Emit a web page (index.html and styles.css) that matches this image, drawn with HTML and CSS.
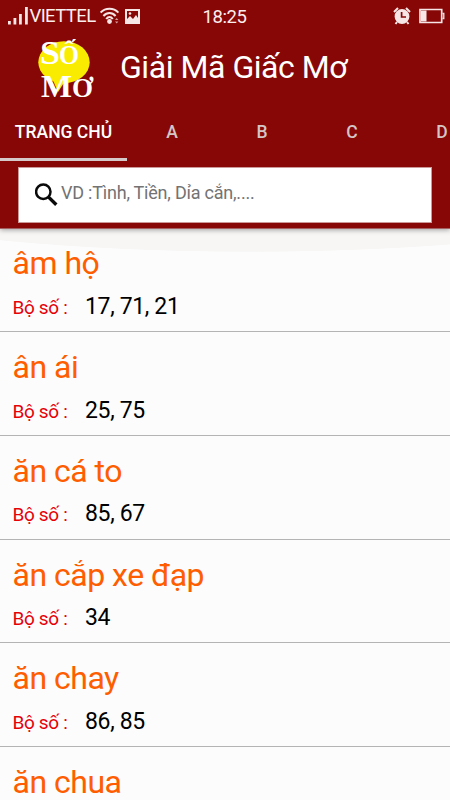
FILE: index.html
```
<!DOCTYPE html>
<html lang="vi">
<head>
  <meta charset="UTF-8">
  <meta name="viewport" content="width=device-width, initial-scale=1.0">
  <title>Giải Mã Giấc Mơ</title>
  <link rel="stylesheet" href="styles.css">
</head>
<body>
  <div class="app">
    <header class="header">
      <div class="status-bar">
        <svg class="signal" width="20" height="18" viewBox="0 0 20 18" fill="#f6e6e6">
          <rect x="0" y="14" width="2.800" height="3.500"/>
          <rect x="5.500" y="11" width="2.800" height="6.500"/>
          <rect x="11" y="7" width="2.800" height="10.500"/>
          <rect x="17" y="0" width="2.800" height="17.500"/>
        </svg>
        <span class="carrier">VIETTEL</span>
        <svg class="wifi" width="20" height="18" viewBox="0 0 20 18" fill="none" stroke="#f6e6e6" stroke-width="2">
          <path d="M.6 5.600C5.500 .6 13.500 .6 18.400 5.600"/>
          <path d="M3.400 9C7 5 12 5 15.600 9"/>
          <path d="M6.200 12C8.200 9.300 10.800 9.300 12.800 12"/>
          <circle cx="9.500" cy="14.500" r="2.400" fill="#f6e6e6" stroke="none"/>
          <path d="M15 13l1.700-2 1.700 2zM15 14.500l1.700 2 1.700-2z" fill="#d79c9c" stroke="none"/>
        </svg>
        <svg class="photo" width="15" height="15" viewBox="0 0 15 15">
          <path d="M0 0h15v15H0zM2 2v8l3-3 3 3 3-4 2 3V2z" fill="#f6e6e6" fill-rule="evenodd"/>
          <circle cx="5" cy="4.500" r="1.300" fill="#f6e6e6"/>
        </svg>
        <span class="clock">18:25</span>
        <svg class="alarm" width="18" height="18" viewBox="0 0 18 18">
          <circle cx="9" cy="9.500" r="7.400" fill="#f6e6e6"/>
          <path d="M1 5l4-4M17 5l-4-4M4 15l-1.500 2M14 15l1.500 2" stroke="#f6e6e6" stroke-width="2" fill="none"/>
          <path d="M8.600 5v5h4.400" stroke="#870606" stroke-width="1.700" fill="none"/>
        </svg>
        <svg class="battery" width="26" height="16" viewBox="0 0 26 16">
          <path d="M1 1.500h21.700v13H1z" fill="none" stroke="#f6e6e6" stroke-width="1.700"/>
          <rect x="2" y="2.500" width="5.500" height="11" fill="#f6e6e6"/>
          <path d="M23.500 5.500h1.300v5h-1.300" fill="none" stroke="#f6e6e6" stroke-width="1.300"/>
        </svg>
      </div>

      <div class="toolbar">
        <svg class="logo" width="60" height="68" viewBox="0 0 60 68">
          <ellipse cx="29" cy="28.200" rx="25.700" ry="21" fill="#f9ec00"/>
          <path d="M17 44h15l-9 14z" fill="#f9ec00"/>
          <g class="logo-text">
            <text x="5" y="29.500" font-size="34" textLength="20" lengthAdjust="spacingAndGlyphs">S</text>
            <text x="24" y="29.500" font-size="27" textLength="20" lengthAdjust="spacingAndGlyphs">Ố</text>
            <text x="6" y="63" font-size="32" textLength="31" lengthAdjust="spacingAndGlyphs">M</text>
            <text x="37" y="63" font-size="28" textLength="21" lengthAdjust="spacingAndGlyphs">Ơ</text>
          </g>
        </svg>
        <h1>Giải Mã Giấc Mơ</h1>
      </div>

      <nav class="tabs">
        <div class="tab active">TRANG CHỦ</div>
        <div class="tab">A</div>
        <div class="tab">B</div>
        <div class="tab">C</div>
        <div class="tab">D</div>
      </nav>

      <div class="search">
        <svg width="24" height="24" viewBox="0 0 24 24" fill="none" stroke="#0a0a0a">
          <circle cx="8.300" cy="8.800" r="7.200" stroke-width="2.500"/>
          <path d="M13.600 14.100l7.700 7.700" stroke-width="3.400"/>
        </svg>
        <span>VD :Tình, Tiền, Dỉa cắn,....</span>
      </div>
    </header>

    <main class="list">
      <div class="item">
        <h2>âm hộ</h2>
        <p><span class="label">Bộ số :</span><span class="numbers">17, 71, 21</span></p>
      </div>
      <div class="item">
        <h2>ân ái</h2>
        <p><span class="label">Bộ số :</span><span class="numbers">25, 75</span></p>
      </div>
      <div class="item">
        <h2>ăn cá to</h2>
        <p><span class="label">Bộ số :</span><span class="numbers">85, 67</span></p>
      </div>
      <div class="item">
        <h2>ăn cắp xe đạp</h2>
        <p><span class="label">Bộ số :</span><span class="numbers">34</span></p>
      </div>
      <div class="item">
        <h2>ăn chay</h2>
        <p><span class="label">Bộ số :</span><span class="numbers">86, 85</span></p>
      </div>
      <div class="item">
        <h2>ăn chua</h2>
      </div>
    </main>
  </div>
</body>
</html>
```
FILE: styles.css
```
:root {
  --primary: #870606;
  --title: #ff5d00;
  --label: #e60008;
  --background: #fcfcfc;
  --border: #b4b4b4;
}

* {
  box-sizing: border-box;
}

body {
  margin: 0;
  font-family: Roboto, sans-serif;
  background-color: var(--background);
  overflow: hidden;
}

.app {
  display: flex;
  flex-direction: column;
  height: 800px;
  overflow: hidden;
}

.header {
  position: relative;
  flex: none;
  height: 229px;
  background-color: var(--primary);
  border-bottom: 1px solid #a46060;
  box-shadow: 0 1px 5px rgba(0, 0, 0, 0.35);
}

.status-bar {
  display: flex;
  align-items: center;
  height: 32px;
  padding: 0 5px 0 8px;
  color: #fbeeee;
}

.carrier {
  width: 70px;
  margin-left: 1.5px;
  font-size: 18.5px;
  letter-spacing: -0.6px;
}

.photo {
  margin-left: 5px;
}

.clock {
  margin: 2px 0 0 63px;
  font-size: 18.5px;
  letter-spacing: -0.4px;
}

.alarm {
  margin-left: auto;
}

.battery {
  margin-left: 8px;
}

.toolbar {
  display: flex;
  align-items: center;
  height: 71px;
  padding-left: 35px;
}

.logo {
  overflow: visible;
}

.logo-text {
  font-family: "Liberation Serif", serif;
  font-weight: bold;
  fill: #fff;
}

.toolbar h1 {
  margin: -2px 0 0 25px;
  color: #fff;
  font-size: 32px;
  font-weight: 400;
  line-height: 40px;
  letter-spacing: -0.45px;
}

.tabs {
  display: flex;
  height: 58px;
  overflow: hidden;
}

.tab {
  flex: none;
  width: 90px;
  height: 58px;
  line-height: 58px;
  text-align: center;
  color: #d4c6c6;
  font-size: 17.5px;
  font-weight: 500;
}

.tab.active {
  width: 127px;
  color: #fff;
  border-bottom: 3px solid #d5c9c9;
}

.search {
  display: flex;
  align-items: center;
  width: 414px;
  height: 56px;
  margin: 6px 0 0 18px;
  padding: 0 16px;
  background-color: #fff;
  border: 1px solid #c99;
  color: #737373;
  font-size: 18px;
}

.search span {
  margin: -5px 0 0 2px;
  letter-spacing: -0.22px;
}

.list {
  flex: 1;
  overflow: hidden;
  background: radial-gradient(ellipse 600px 126px at 250px -103px, #f7f6f5 99.5%, transparent 100%);
}

.item {
  height: 103.8px;
  padding: 15px 13px 0 12.5px;
  border-bottom: 1px solid var(--border);
}

.item:first-child {
  height: 103px;
  padding-top: 14.4px;
}

.item h2 {
  margin: 0;
  color: var(--title);
  font-size: 32px;
  font-weight: 400;
  line-height: 40px;
  letter-spacing: -0.5px;
}

.item p {
  display: flex;
  align-items: baseline;
  margin: 9.6px 0 0;
  line-height: 28px;
}

.label {
  width: 72.5px;
  color: var(--label);
  font-size: 19px;
  letter-spacing: -0.35px;
}

.numbers {
  color: #000;
  font-size: 23px;
  letter-spacing: -0.35px;
}
```
